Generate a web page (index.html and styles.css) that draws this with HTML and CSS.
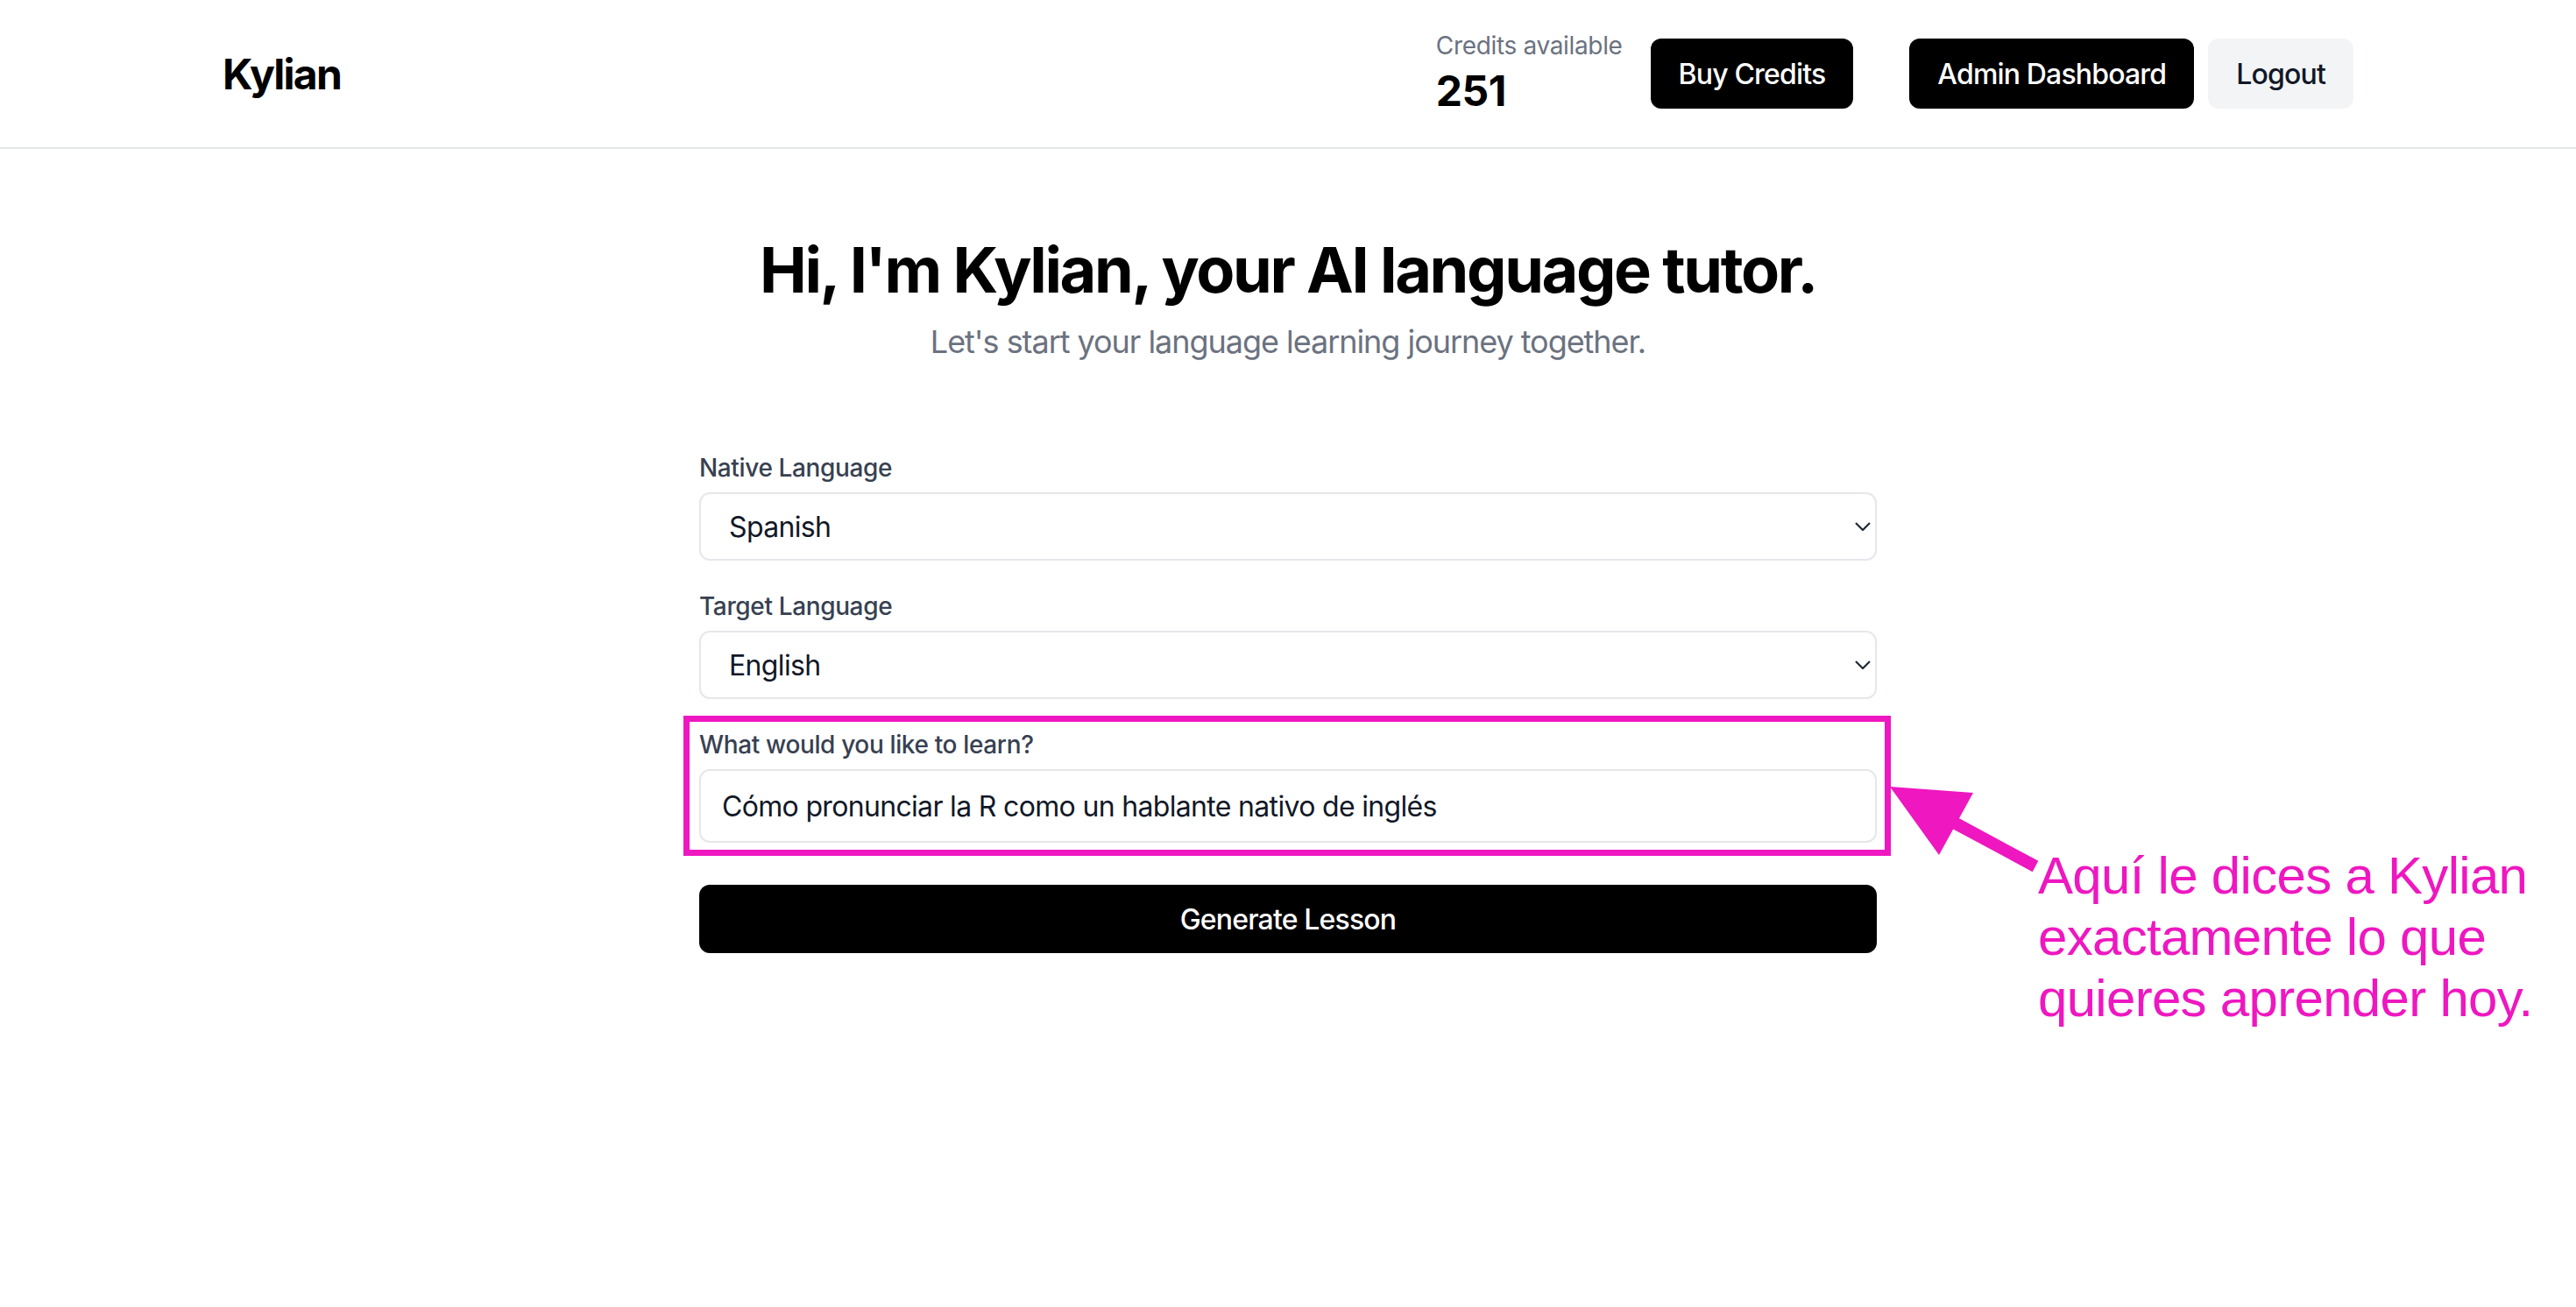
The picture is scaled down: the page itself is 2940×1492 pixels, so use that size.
FILE: index.html
```html
<!DOCTYPE html>
<html lang="en">
<head>
    <meta charset="UTF-8">
    <meta name="viewport" content="width=device-width, initial-scale=1.0">
    <title>Kylian - AI language tutor</title>
    <link rel="stylesheet" href="styles.css">
</head>
<body>

    <header class="topbar">
        <div class="topbar-inner">
            <a class="logo" href="#">Kylian</a>
            <div class="topbar-actions">
                <div class="credits">
                    <span class="credits-label">Credits available</span>
                    <span class="credits-value">251</span>
                </div>
                <button class="btn btn-dark">Buy Credits</button>
                <button class="btn btn-dark btn-admin">Admin Dashboard</button>
                <button class="btn btn-light">Logout</button>
            </div>
        </div>
    </header>

    <main class="content">
        <h1>Hi, I'm Kylian, your AI language tutor.</h1>
        <p class="subtitle">Let's start your language learning journey together.</p>

        <form class="lesson-form" onsubmit="return false">
            <div class="field">
                <label for="native">Native Language</label>
                <div class="select-wrap">
                    <select id="native">
                        <option>Spanish</option>
                        <option>English</option>
                    </select>
                    <svg class="chevron" viewBox="0 0 18 10"><path d="M1 1l8 8 8-8"/></svg>
                </div>
            </div>

            <div class="field">
                <label for="target">Target Language</label>
                <div class="select-wrap">
                    <select id="target">
                        <option>English</option>
                        <option>Spanish</option>
                    </select>
                    <svg class="chevron" viewBox="0 0 18 10"><path d="M1 1l8 8 8-8"/></svg>
                </div>
            </div>

            <div class="field">
                <label for="topic">What would you like to learn?</label>
                <input id="topic" type="text" value="Cómo pronunciar la R como un hablante nativo de inglés">
                <span class="highlight-box"></span>
            </div>

            <button class="btn-generate" type="submit">Generate Lesson</button>
        </form>
    </main>

    <!-- annotation drawn over the screenshot -->
    <svg class="callout-arrow" viewBox="0 0 200 130">
        <polygon points="17,18 112,25 73,96"/>
        <line x1="92" y1="60" x2="183" y2="109"/>
    </svg>
    <p class="callout-text">Aquí le dices a Kylian<br>exactamente lo que<br>quieres aprender hoy.</p>

</body>
</html>
```

FILE: styles.css
```css
* {
    box-sizing: border-box;
}
body {
    margin: 0;
    position: relative;
    height: 1492px;
    overflow: hidden;
    background-color: #fff;
    color: #000;
    font-family: 'Inter', 'Noto Sans', sans-serif;
}
.topbar {
    border-bottom: 2px solid #e5e7eb;
}
.topbar-inner {
    max-width: 2560px;
    height: 168px;
    margin: 0 auto;
    padding: 0 64px;
    display: flex;
    align-items: center;
    justify-content: space-between;
}
.logo {
    font-size: 48px;
    font-weight: 700;
    letter-spacing: -0.036em;
    color: #000;
    text-decoration: none;
}
.topbar-actions {
    display: flex;
    align-items: center;
}
.credits {
    display: flex;
    flex-direction: column;
    margin-right: 32px;
}
.credits-label {
    font-size: 28px;
    line-height: 40px;
    letter-spacing: -0.012em;
    color: #6b7280;
}
.credits-value {
    font-size: 48px;
    line-height: 64px;
    font-weight: 700;
    letter-spacing: -0.01em;
}
.btn {
    height: 80px;
    padding: 0 32px;
    border: none;
    border-radius: 12px;
    font-family: inherit;
    font-size: 32px;
    font-weight: 500;
    letter-spacing: -0.026em;
    cursor: pointer;
}
.btn-dark {
    background-color: #000;
    color: #fff;
}
.btn-admin {
    margin-left: 64px;
}
.btn-light {
    margin-left: 16px;
    background-color: #f3f4f6;
    color: #111827;
}

.content {
    max-width: 1344px;
    margin: 0 auto;
    padding-top: 98px;
}
h1 {
    margin: 0;
    font-size: 72px;
    line-height: 80px;
    font-weight: 700;
    letter-spacing: -0.033em;
    text-align: center;
}
.subtitle {
    margin: 14px 0 0;
    font-size: 36px;
    line-height: 56px;
    letter-spacing: -0.029em;
    color: #6b7280;
    text-align: center;
}
.lesson-form {
    margin-top: 96px;
    display: flex;
    flex-direction: column;
    gap: 32px;
}
.field {
    position: relative;
    display: flex;
    flex-direction: column;
}
.field label {
    margin-bottom: 8px;
    font-size: 28px;
    line-height: 40px;
    font-weight: 500;
    letter-spacing: -0.013em;
    color: #374151;
}
.select-wrap {
    position: relative;
}
select,
input {
    width: 100%;
    border: 2px solid #e5e7eb;
    border-radius: 12px;
    background-color: #fff;
    font-family: inherit;
    font-size: 32px;
    color: #111827;
    outline: none;
}
select {
    appearance: none;
    height: 78px;
    padding: 0 64px 0 32px;
    letter-spacing: -0.02em;
}
input {
    height: 84px;
    padding: 0 24px;
    letter-spacing: -0.021em;
}
.chevron {
    position: absolute;
    right: 7px;
    top: 34px;
    width: 18px;
    height: 10px;
    fill: none;
    stroke: #1f2937;
    stroke-width: 2.2;
    pointer-events: none;
}
.highlight-box {
    position: absolute;
    top: -13px;
    left: -18px;
    right: -16px;
    bottom: -15px;
    border: 7px solid #ee17c0;
    pointer-events: none;
}
.btn-generate {
    height: 78px;
    margin-top: 16px;
    border: none;
    border-radius: 12px;
    background-color: #000;
    color: #fff;
    font-family: inherit;
    font-size: 32px;
    font-weight: 500;
    letter-spacing: -0.026em;
    cursor: pointer;
}

.callout-arrow {
    position: absolute;
    left: 2140px;
    top: 880px;
    width: 200px;
    height: 130px;
}
.callout-arrow polygon {
    fill: #ee17c0;
}
.callout-arrow line {
    stroke: #ee17c0;
    stroke-width: 14;
}
.callout-text {
    position: absolute;
    left: 2326px;
    top: 965px;
    margin: 0;
    font-family: 'Liberation Sans', Arial, sans-serif;
    font-size: 60px;
    line-height: 70px;
    letter-spacing: -0.7px;
    color: #ee17c0;
    white-space: nowrap;
}
```
